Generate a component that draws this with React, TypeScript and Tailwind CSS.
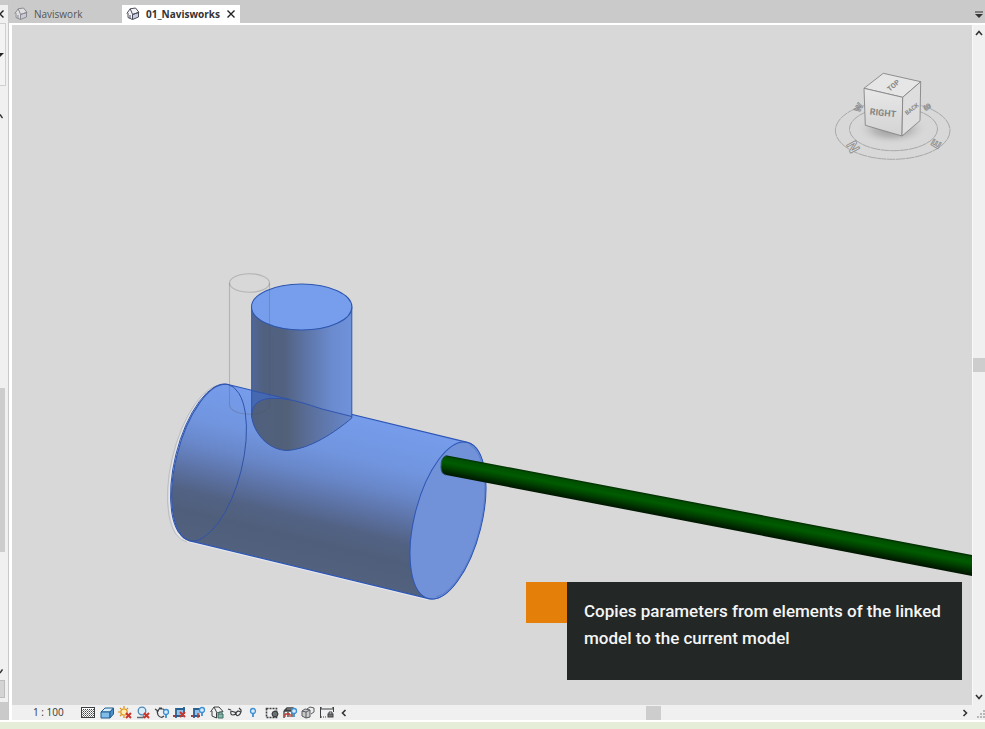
import type { ReactNode } from "react";

const INK = "#3c4043";
const BLUE = "#3f8fd0";
const RED = "#c8352b";

function HomeIcon({ faded = false }: { faded?: boolean }) {
  return (
    <svg viewBox="0 0 14 14" className={faded ? "size-3.5 shrink-0 opacity-50" : "size-3.5 shrink-0"} fill="none" stroke="#4a4c58" strokeWidth="1" strokeLinejoin="round" aria-hidden="true">
      <path d="M1 5.500 4 1.500 9 1 13 5 12.500 10 7 13 2 11Z" fill="#f4f4f8" stroke="none" />
      <path d="M6.500 7.500 12.500 5.500V10L6.500 12.500Z" fill="#c9cbe0" />
      <path d="M.8 6.500 4.200 1.800 6.500 7.200" />
      <path d="M4.200 1.800 9.500 1 13 5.300 6.500 7.500" />
      <path d="M2 6V10.500L6.500 12.500M4 8v3.300" />
    </svg>
  );
}

function RedX({ x = 9, y = 8 }: { x?: number; y?: number }) {
  return <path d={`M${x} ${y}l5 5m0-5l-5 5`} stroke={RED} strokeWidth="2" />;
}

function Bulb({ x = 12, y = 5 }: { x?: number; y?: number }) {
  return (
    <g>
      <circle cx={x} cy={y} r="2.500" fill="#d7edff" stroke={BLUE} strokeWidth="1.3" />
      <path d={`M${x} ${y + 3}v3`} stroke={BLUE} strokeWidth="1.8" />
    </g>
  );
}

const tools: { name: string; art: ReactNode }[] = [
  {
    name: "Detail level",
    art: (
      <g>
        <rect x="1.500" y="2.500" width="13" height="10" fill="#fff" stroke={INK} />
        <path d="M3 4.500h11M3 6.500h11M3 8.500h11M3 10.500h11" stroke="#444" strokeDasharray="1 1" />
        <path d="M2 5.500h12M2 7.500h12M2 9.500h12M2 11.500h12" stroke="#888" strokeDasharray="1 1" />
      </g>
    ),
  },
  {
    name: "Visual style",
    art: (
      <g stroke="#1f5c8f" strokeLinejoin="round">
        <path d="M2 7 6 3h8.500L11 7Z" fill="#d5ecfb" />
        <path d="M2 7h9v6H2Z" fill="#82bde8" />
        <path d="M11 7l3.500-4v6L11 13Z" fill="#4d91c8" />
      </g>
    ),
  },
  {
    name: "Sun path off",
    art: (
      <g>
        <path d="M7 1v2M7 11v2M1 7h2M3 3l1 1M11 3l-1 1M3 11l1-1" stroke="#d98c1b" strokeWidth="1.2" />
        <circle cx="7" cy="7" r="3.200" fill="#fff1b5" stroke="#e09a25" strokeWidth="1.3" />
        <RedX />
      </g>
    ),
  },
  {
    name: "Shadows off",
    art: (
      <g>
        <circle cx="7" cy="6" r="3.800" fill="#d9ecfa" stroke="#4b86b5" strokeWidth="1.3" />
        <path d="M2 12.500h6l1-2" stroke="#5d6a73" strokeWidth="1.5" />
        <RedX />
      </g>
    ),
  },
  {
    name: "Show rendering dialog",
    art: (
      <g>
        <path d="M1 4l3 2 1-2h4l2 1M3 6l1 4q3 4 6 1M5 3h3" stroke={INK} strokeWidth="1.200" />
        <Bulb x={12} y={7} />
      </g>
    ),
  },
  {
    name: "Crop view off",
    art: (
      <g>
        <path d="M5 4h6v7H5Z" fill="#8fc2e8" />
        <path d="M1 11h10M4 13V4h9M12 2v7" stroke="#285f91" strokeWidth="1.800" />
        <RedX x={8} y={7} />
        <path d="M1 11h2" stroke={RED} strokeWidth="1.5" />
      </g>
    ),
  },
  {
    name: "Hide crop region",
    art: (
      <g>
        <path d="M4 4h6v7H4Z" fill="#8fc2e8" />
        <path d="M1 11h9M4 13V4h6" stroke="#285f91" strokeWidth="1.800" />
        <path d="M8 8v5M1 11h2" stroke={RED} strokeWidth="1.4" />
        <Bulb x={12} y={5} />
      </g>
    ),
  },
  {
    name: "Lock 3D view",
    art: (
      <g stroke={INK} strokeLinejoin="round">
        <path d="M1.500 7 5 2h5l4 4.500-6 1.500L5 2" fill="#f0f0f0" />
        <path d="M3 6v5l4.500 2V8" />
        <path d="M10 9V7h3v2" stroke="#477c70" />
        <rect x="9" y="9" width="5" height="4" fill="#8ab8ad" stroke="#386e61" />
      </g>
    ),
  },
  {
    name: "Temporary hide or isolate",
    art: (
      <g stroke={INK} strokeWidth="1.200">
        <path d="M1 4l3 1M4 6q-1 4 2 4t3-3M9 8q0 3 2 2.500T14 7M14 7V5l-2-2" />
        <path d="M4 6l5 1.500 2-1.500 3 1" />
      </g>
    ),
  },
  { name: "Reveal hidden elements", art: <Bulb x={8} y={6} /> },
  {
    name: "Temporary view properties",
    art: (
      <g stroke={INK}>
        <rect x="2.500" y="3.500" width="10" height="9" strokeWidth="1.600" strokeDasharray="2 1" />
        <circle cx="11" cy="9" r="2.500" fill="#f0f0f0" strokeWidth="1.400" />
        <path d="M11 5.500v7M7.500 9h7" strokeWidth="1" />
      </g>
    ),
  },
  {
    name: "Show analytical model",
    art: (
      <g stroke={INK}>
        <path d="M2 6 5 3h6v3M2 6h8v6M2 6v7M6 7v5M3 5h7" strokeWidth="1.300" />
        <path d="M3 9h5M3 12V9M8 9v3" stroke={RED} strokeWidth="1.300" />
        <Bulb x={12} y={6} />
      </g>
    ),
  },
  {
    name: "Highlight displacement sets",
    art: (
      <g stroke="#585b5e">
        <path d="M7 4l3-2 4 1v4l-3 2" fill="#eee" />
        <path d="M2 6l3-2 5 1v7l-4 1-4-2Z" fill="#c8cacc" />
        <path d="M2 6l4 1v6M6 7l4-2" />
      </g>
    ),
  },
  {
    name: "Reveal constraints",
    art: (
      <g stroke={INK}>
        <path d="M1 4h14M1.500 2v11M14.500 2v5M1 4l2-1.500M15 4l-2-1.500" />
        <path d="M2 12h6" strokeDasharray="1 1" />
        <path d="M10 9V7h3v2" />
        <rect x="9" y="9" width="5" height="3" fill="#777" />
      </g>
    ),
  },
];

function Chevron({ dir }: { dir: "up" | "down" | "left" | "right" }) {
  const d = {
    up: "M1 6 4 2.500 7 6",
    down: "M1 2 4 5.500 7 2",
    left: "M5.500 1 2.500 4l3 3",
    right: "M2.500 1 5.500 4l-3 3",
  }[dir];
  return (
    <svg viewBox="0 0 8 8" className="size-2 shrink-0" fill="none" stroke="#333" strokeWidth="1.600" aria-hidden="true">
      <path d={d} />
    </svg>
  );
}

function ModelScene() {
  return (
    <svg viewBox="12 25 960 680" preserveAspectRatio="xMinYMin slice" className="absolute inset-0 size-full" role="img" aria-label="3D model of a tee fitting with a connected pipe">
      <defs>
        <linearGradient id="body" gradientUnits="userSpaceOnUse" x1="347" y1="413" x2="309" y2="570">
          <stop offset="0" stopColor="#769ceb" />
          <stop offset=".25" stopColor="#7195df" />
          <stop offset=".4" stopColor="#6988cb" />
          <stop offset=".55" stopColor="#5d74a8" />
          <stop offset=".7" stopColor="#526284" />
          <stop offset=".82" stopColor="#4f5f7b" />
          <stop offset="1" stopColor="#52617e" />
        </linearGradient>
        <linearGradient id="branch" gradientUnits="userSpaceOnUse" x1="252" y1="0" x2="352" y2="0">
          <stop offset="0" stopColor="#526795" />
          <stop offset=".12" stopColor="#50607f" />
          <stop offset=".32" stopColor="#526180" />
          <stop offset=".6" stopColor="#607ab0" />
          <stop offset=".8" stopColor="#6b8bcf" />
          <stop offset="1" stopColor="#6f92dc" />
        </linearGradient>
        <linearGradient id="inside" gradientUnits="userSpaceOnUse" x1="252" y1="0" x2="352" y2="0">
          <stop offset="0" stopColor="#4f607f" />
          <stop offset=".35" stopColor="#526078" />
          <stop offset=".6" stopColor="#5b709d" />
          <stop offset="1" stopColor="#6888cc" />
        </linearGradient>
        <linearGradient id="pipe" gradientUnits="userSpaceOnUse" x1="536" y1="472" x2="532" y2="493">
          <stop offset="0" stopColor="#002800" />
          <stop offset=".12" stopColor="#005000" />
          <stop offset=".35" stopColor="#005c00" />
          <stop offset=".6" stopColor="#004000" />
          <stop offset=".85" stopColor="#001f00" />
          <stop offset="1" stopColor="#001000" />
        </linearGradient>
        <radialGradient id="cubeShadow">
          <stop offset="0" stopColor="#777" stopOpacity=".75" />
          <stop offset=".5" stopColor="#999" stopOpacity=".5" />
          <stop offset="1" stopColor="#d8d8d8" stopOpacity="0" />
        </radialGradient>
        <linearGradient id="cubeFront" x1="0" y1="0" x2="0" y2="1">
          <stop offset="0" stopColor="#e8e8e8" />
          <stop offset="1" stopColor="#d3d3d3" />
        </linearGradient>
      </defs>

      {/* Offset outline of the linked fitting */}
      <g fill="none">
        <path d="M227 385A33.600 80.500 14 0 0 188 541.500L428 599.500" stroke="#e4e6ec" strokeWidth="1.600" />
        <path d="M224 385A33.600 80.500 14 0 0 187 542" stroke="#b4b6bb" strokeWidth=".8" />
      </g>

      {/* Run of the tee */}
      <path d="M228 384.500 467.500 442.400A33.600 80.500 14 0 1 428.600 598.600L189 540.600A33.600 80.500 14 0 1 228 384.500Z" fill="url(#body)" stroke="#2c56b6" strokeWidth="1.100" />
      <ellipse cx="208.500" cy="462.500" rx="33.600" ry="80.500" transform="rotate(14 208.500 462.500)" fill="none" stroke="#2f52a6" strokeWidth=".9" />
      <ellipse cx="448" cy="520.500" rx="33.600" ry="80.500" transform="rotate(14 448 520.500)" fill="#7192d9" stroke="#2c56b6" strokeWidth="1" />
      <path d="M470 445A33 79 14 0 1 436 597" fill="none" stroke="#4c70c0" strokeWidth=".6" />

      {/* Branch of the tee */}
      <path d="M251.700 307V417C254 433 268 450 287 450.500C310 449 334 433 351.800 418V307Z" fill="url(#branch)" />
      <path d="M251.700 390.500 300 402C284 397 266 397 258 403Q253 408 251.700 413Z" fill="#4668b0" />
      <path d="M251.700 417C251 405 259 397.500 275 398.500C291 398 309 405 322 409Q338 413 351.800 416.500V418C334 433 310 449 287 450.500C268 450 254 433 251.700 417Z" fill="url(#inside)" />
      <g fill="none" stroke="#2f54ab" strokeWidth="1">
        <path d="M251.700 307V417C254 433 268 450 287 450.500C310 449 334 433 351.800 418V307" />
        <path d="M251.700 417C251 405 259 397.500 275 398.500C291 398 309 405 322 409Q338 413 351.800 416.500M251.700 390.500 290 399.500" />
      </g>
      <ellipse cx="301.700" cy="307" rx="50.200" ry="23" fill="#779eec" stroke="#2c56b0" strokeWidth="1.100" />

      {/* Outline of the smaller riser */}
      <g fill="none" stroke="#555" strokeOpacity=".28" strokeWidth="1.100">
        <ellipse cx="249.500" cy="283" rx="20" ry="9.300" />
        <path d="M229.500 283V405A20 9.300 0 0 0 269.500 405V283" />
      </g>

      {/* Pipe leaving the right end */}
      <path d="M447 455.500 972 555V576L446 475Q441 474 441 467 441 456 447 455.500Z" fill="url(#pipe)" />
      <path d="M447 455.500Q441 456 441 467 441 474 446 475" fill="none" stroke="#28566b" strokeWidth="1" />

      {/* View cube */}
      <g stroke="#a2a2a2" strokeWidth=".9" fill="none">
        <ellipse cx="892.700" cy="130.500" rx="57.300" ry="28.800" strokeDasharray="9 .5" />
        <ellipse cx="893.500" cy="129" rx="44" ry="21.700" strokeDasharray="9 .5" />
        <ellipse cx="892" cy="129" rx="36" ry="16" fill="url(#cubeShadow)" stroke="none" />
      </g>
      <g fontFamily="'Liberation Sans', Arial, sans-serif" fontWeight="700" textAnchor="middle" fill="#dcdcdc" stroke="#8d8d8d" strokeWidth=".8">
        <text x="853" y="152" fontSize="15" transform="rotate(62 853 147)">N</text>
        <text x="936" y="148" fontSize="12" transform="rotate(-60 936 144)">E</text>
        <text x="858" y="111" fontSize="9" transform="rotate(-60 858 107)">W</text>
        <text x="927" y="110" fontSize="9" transform="rotate(60 927 107)">S</text>
      </g>
      <g stroke="#858585" strokeWidth=".9" strokeLinejoin="round">
        <path d="M864 88.300 883.300 73.300 920.700 81.700 902.700 97.300Z" fill="#e6e6e6" />
        <path d="M864 88.300 902.700 97.300 902 136 865.300 125.300Z" fill="url(#cubeFront)" />
        <path d="M902.700 97.300 920.700 81.700 920 120.700 902 136Z" fill="#dedede" />
      </g>
      <g fontFamily="'Roboto', sans-serif" fontWeight="700" textAnchor="middle" fill="#858585">
        <text x="883" y="116" fontSize="9" transform="rotate(6 883 112)">RIGHT</text>
        <text x="912" y="111" fontSize="6" transform="rotate(-38 912 109)">BACK</text>
        <text x="893" y="88" fontSize="7" transform="rotate(-40 893 85)">TOP</text>
      </g>
    </svg>
  );
}

function LeftDock() {
  return (
    <aside className="flex w-[9px] shrink-0 flex-col overflow-hidden border-r border-[#c8c8c8] bg-[#f0f0f0]">
      <div className="h-[5px] shrink-0 bg-[#cacaca]" />
      <button type="button" aria-label="Close palette" className="flex h-[18px] shrink-0 items-center">
        <svg viewBox="0 0 4 8" className="h-2 w-1" fill="none" stroke="#222" strokeWidth="1.400" aria-hidden="true"><path d="M3.500.5 0 4l3.500 3.500" /></svg>
      </button>
      <button type="button" aria-label="Choose type" className="flex h-[63px] w-1.5 shrink-0 items-center border-y border-r border-[#cfcfcf] bg-[#f3f3f3]">
        <svg viewBox="0 0 4 4" className="size-1" fill="#222" aria-hidden="true"><path d="M0 0h4L0 4Z" /></svg>
      </button>
      <button type="button" aria-label="Scroll palette up" className="mt-6 flex h-3 shrink-0 items-center">
        <svg viewBox="0 0 3 5" className="h-[5px] w-[3px]" fill="none" stroke="#333" strokeWidth="1.400" aria-hidden="true"><path d="M0 .5 2.500 4" /></svg>
      </button>
      <div className="flex min-h-0 flex-1 flex-col">
        <div className="grow-[267] basis-0" />
        <div className="w-[5px] grow-[165] basis-0 bg-[#cdcdcd]" />
        <div className="grow-[114] basis-0" />
      </div>
      <button type="button" aria-label="Scroll palette down" className="mb-1 flex h-2.5 shrink-0 items-center">
        <svg viewBox="0 0 3 5" className="h-[5px] w-[3px]" fill="none" stroke="#333" strokeWidth="1.400" aria-hidden="true"><path d="M0 4 2.500.5" /></svg>
      </button>
      <div className="h-[18px] w-[5px] shrink-0 border border-l-0 border-[#bdbdbd] bg-[#d4d4d4]" />
      <div className="mt-1 h-[18px] shrink-0 bg-[#cacaca]" />
    </aside>
  );
}

export default function App() {
  return (
    <div className="flex h-screen w-full flex-col overflow-hidden bg-[#e5ecd8] font-['Open_Sans','Noto_Sans',sans-serif] text-[10px] text-[#333]">
      <div className="flex min-h-0 flex-1 border-b-2 border-white">
        <LeftDock />
        <main className="flex min-w-0 flex-1 flex-col">
          <div className="flex h-[23px] shrink-0 items-end bg-[#cacaca]" role="tablist" aria-label="Open views">
            <button type="button" role="tab" aria-selected="false" className="flex h-[18px] w-[113px] items-center gap-1.5 px-[5px] text-[#555]">
              <HomeIcon faded />
              Naviswork
            </button>
            <div className="flex h-[18px] items-center bg-white pr-[3px]">
              <button type="button" role="tab" aria-selected="true" className="flex h-full items-center gap-1.5 px-1 pr-[5px] font-bold text-[#333]">
                <HomeIcon />
                01_Navisworks
              </button>
              <button type="button" aria-label="Close 01_Navisworks" className="flex size-3 items-center justify-center">
                <svg viewBox="0 0 8 8" className="size-2" fill="none" stroke="#222" strokeWidth="1.400" aria-hidden="true"><path d="m.5.5 7 7m0-7-7 7" /></svg>
              </button>
            </div>
            <button type="button" aria-label="List open views" className="ml-auto flex h-[18px] w-3 items-center justify-center">
              <svg viewBox="0 0 8 7" className="h-[7px] w-2" aria-hidden="true"><path d="M0 1h8" stroke="#333" /><path d="M0 3h8L4 7Z" fill="#333" /></svg>
            </button>
          </div>
          <div className="flex min-h-0 flex-1 flex-col border-t-2 border-l-3 border-white bg-[#f0f0f0]">
            <div className="flex min-h-0 flex-1">
              <section className="relative min-w-0 flex-1 overflow-hidden bg-[#d8d8d8]">
                <ModelScene />
                <div className="absolute right-2.5 bottom-[25px] flex items-start">
                  <div className="size-[41px] bg-[#e47f0a]" />
                  <p className="h-[98px] w-[395px] bg-[#232726] px-[17px] py-4 font-[Roboto,sans-serif] text-[17px] leading-[27px] font-medium text-[#f5f5f5]">
                    Copies parameters from elements of the linked model to the current model
                  </p>
                </div>
              </section>
              <div className="flex w-[13px] shrink-0 flex-col items-center border-l border-[#f8f8f8]">
                <button type="button" aria-label="Scroll up" className="flex h-4 items-center"><Chevron dir="up" /></button>
                <div className="grow-[317] basis-0" />
                <div className="h-3.5 w-full bg-[#cdcdcd]" />
                <div className="grow-[317] basis-0" />
                <button type="button" aria-label="Scroll down" className="flex h-4 items-center"><Chevron dir="down" /></button>
              </div>
            </div>
            <div className="flex h-[15px] shrink-0 items-center">
              <button type="button" className="w-[67px] shrink-0 pl-[21px] text-left whitespace-nowrap">1 : 100</button>
              <div className="grid w-[257px] shrink-0 grid-cols-14" role="toolbar" aria-label="View controls">
                {tools.map((tool) => (
                  <button key={tool.name} type="button" aria-label={tool.name} className="flex justify-center">
                    <svg viewBox="0 0 16 15" className="h-[15px] w-4 shrink-0" fill="none" aria-hidden="true">{tool.art}</svg>
                  </button>
                ))}
              </div>
              <button type="button" aria-label="Scroll left" className="flex w-4 shrink-0 justify-center"><Chevron dir="left" /></button>
              <div className="flex h-full min-w-0 flex-1 items-center">
                <div className="grow-[294] basis-0" />
                <div className="h-3.5 w-[15px] bg-[#cdcdcd]" />
                <div className="grow-[297] basis-0" />
              </div>
              <button type="button" aria-label="Scroll right" className="flex w-3.5 shrink-0 justify-center"><Chevron dir="right" /></button>
              <svg viewBox="0 0 13 15" className="h-[15px] w-[13px] shrink-0" fill="#b8b8b8" aria-hidden="true">
                <path d="M11 5h2v2h-2zM8 8h2v2H8zM11 8h2v2h-2zM5 11h2v2H5zM8 11h2v2H8zM11 11h2v2h-2z" />
              </svg>
            </div>
          </div>
        </main>
      </div>
      <footer className="h-[7px] shrink-0 bg-[#e5ecd8]" />
    </div>
  );
}
